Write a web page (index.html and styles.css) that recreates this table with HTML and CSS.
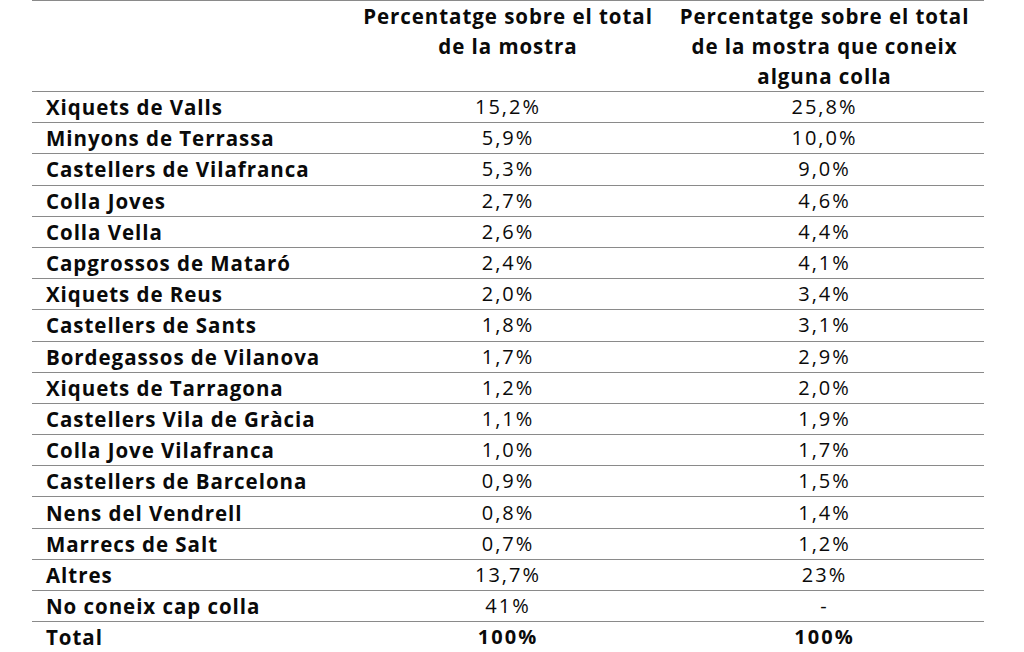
FILE: index.html
```html
<!DOCTYPE html>
<html lang="ca">
<head>
<meta charset="utf-8">
<title>Colles castelleres</title>
<link rel="stylesheet" href="styles.css">
</head>
<body>
<table class="data">
  <thead>
    <tr>
      <th class="name"></th>
      <th class="val">Percentatge sobre el total<br>de la mostra</th>
      <th class="val">Percentatge sobre el total<br>de la mostra que coneix<br>alguna colla</th>
    </tr>
  </thead>
  <tbody>
    <tr><td class="name">Xiquets de Valls</td><td class="val">15,2%</td><td class="val">25,8%</td></tr>
    <tr><td class="name">Minyons de Terrassa</td><td class="val">5,9%</td><td class="val">10,0%</td></tr>
    <tr><td class="name">Castellers de Vilafranca</td><td class="val">5,3%</td><td class="val">9,0%</td></tr>
    <tr><td class="name">Colla Joves</td><td class="val">2,7%</td><td class="val">4,6%</td></tr>
    <tr><td class="name">Colla Vella</td><td class="val">2,6%</td><td class="val">4,4%</td></tr>
    <tr><td class="name">Capgrossos de Mataró</td><td class="val">2,4%</td><td class="val">4,1%</td></tr>
    <tr><td class="name">Xiquets de Reus</td><td class="val">2,0%</td><td class="val">3,4%</td></tr>
    <tr><td class="name">Castellers de Sants</td><td class="val">1,8%</td><td class="val">3,1%</td></tr>
    <tr><td class="name">Bordegassos de Vilanova</td><td class="val">1,7%</td><td class="val">2,9%</td></tr>
    <tr><td class="name">Xiquets de Tarragona</td><td class="val">1,2%</td><td class="val">2,0%</td></tr>
    <tr><td class="name">Castellers Vila de Gràcia</td><td class="val">1,1%</td><td class="val">1,9%</td></tr>
    <tr><td class="name">Colla Jove Vilafranca</td><td class="val">1,0%</td><td class="val">1,7%</td></tr>
    <tr><td class="name">Castellers de Barcelona</td><td class="val">0,9%</td><td class="val">1,5%</td></tr>
    <tr><td class="name">Nens del Vendrell</td><td class="val">0,8%</td><td class="val">1,4%</td></tr>
    <tr><td class="name">Marrecs de Salt</td><td class="val">0,7%</td><td class="val">1,2%</td></tr>
    <tr><td class="name">Altres</td><td class="val">13,7%</td><td class="val">23%</td></tr>
    <tr><td class="name">No coneix cap colla</td><td class="val">41%</td><td class="val">-</td></tr>
    <tr class="total"><td class="name">Total</td><td class="val">100%</td><td class="val">100%</td></tr>
  </tbody>
</table>
</body>
</html>
```

FILE: styles.css
```css
html, body {
  margin: 0;
  padding: 0;
  background: #ffffff;
}

body {
  font-family: "Open Sans", "Liberation Sans", sans-serif;
  color: #0a0a0a;
  overflow: hidden;
}

.data {
  margin-left: 32px;
  width: 952px;
  border-collapse: collapse;
  table-layout: fixed;
  border-top: 1px solid #8a8a8a;
}

.data th,
.data td {
  padding: 0 8px;
  font-size: 20.5px;
}

.data th {
  height: 90px;
  line-height: 30px;
  font-weight: 700;
  letter-spacing: 0.95px;
  vertical-align: top;
  text-align: center;
  border-bottom: 1px solid #8a8a8a;
  white-space: nowrap;
}

.data th.name { width: 303px; }
.data th.val:nth-child(2) { width: 298px; }

.data td {
  height: 30.2px;
  line-height: 30px;
  vertical-align: middle;
  border-bottom: 1px solid #8a8a8a;
  white-space: nowrap;
}

.data td.name {
  font-weight: 700;
  letter-spacing: 0.95px;
  text-align: left;
  padding-left: 14px;
}

.data td.val {
  font-weight: 400;
  font-size: 20px;
  letter-spacing: 2px;
  text-align: center;
}

.data tr.total td {
  border-bottom: none;
  font-weight: 700;
}
```
